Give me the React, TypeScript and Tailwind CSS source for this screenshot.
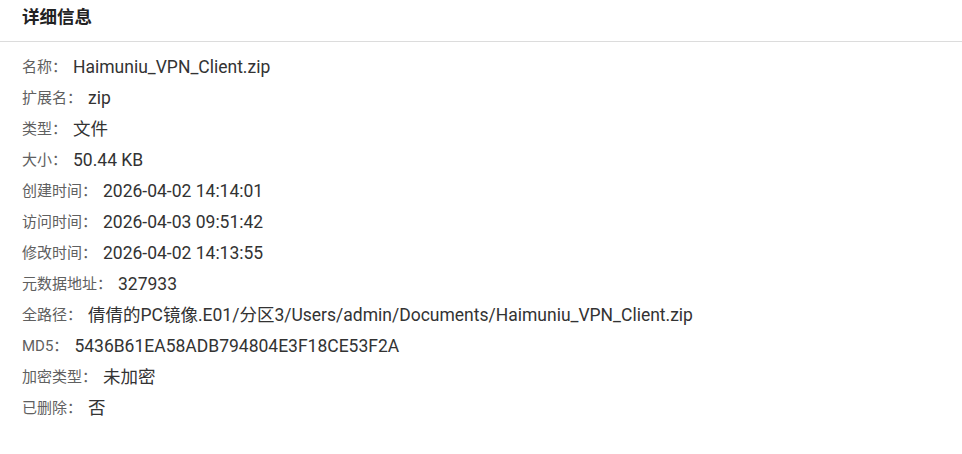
import React from "react";

const rows: [string, string][] = [
  ["名称：", "Haimuniu_VPN_Client.zip"],
  ["扩展名：", "zip"],
  ["类型：", "文件"],
  ["大小：", "50.44 KB"],
  ["创建时间：", "2026-04-02 14:14:01"],
  ["访问时间：", "2026-04-03 09:51:42"],
  ["修改时间：", "2026-04-02 14:13:55"],
  ["元数据地址：", "327933"],
  ["全路径：", "倩倩的PC镜像.E01/分区3/Users/admin/Documents/Haimuniu_VPN_Client.zip"],
  ["MD5：", "5436B61EA58ADB794804E3F18CE53F2A"],
  ["加密类型：", "未加密"],
  ["已删除：", "否"],
];

export default function App() {
  return (
    <div
      className="w-[962px] h-[454px] bg-white overflow-hidden"
      style={{ fontFamily: 'Roboto, "Noto Sans CJK SC", sans-serif' }}
    >
      <div className="h-[42px] border-b border-[#dcdcdc] pl-[22px] pt-[5px]">
        <span className="text-[17.5px] leading-[24px] font-bold text-[#222]">详细信息</span>
      </div>
      <div className="pt-[10px] pl-[22px]">
        {rows.map(([k, v]) => (
          <div key={k} className="h-[31px] flex items-center">
            <span className="text-[15px] text-[#606060]">{k}</span>
            <span className="ml-[6px] text-[17.5px] text-[#333]">{v}</span>
          </div>
        ))}
      </div>
    </div>
  );
}
